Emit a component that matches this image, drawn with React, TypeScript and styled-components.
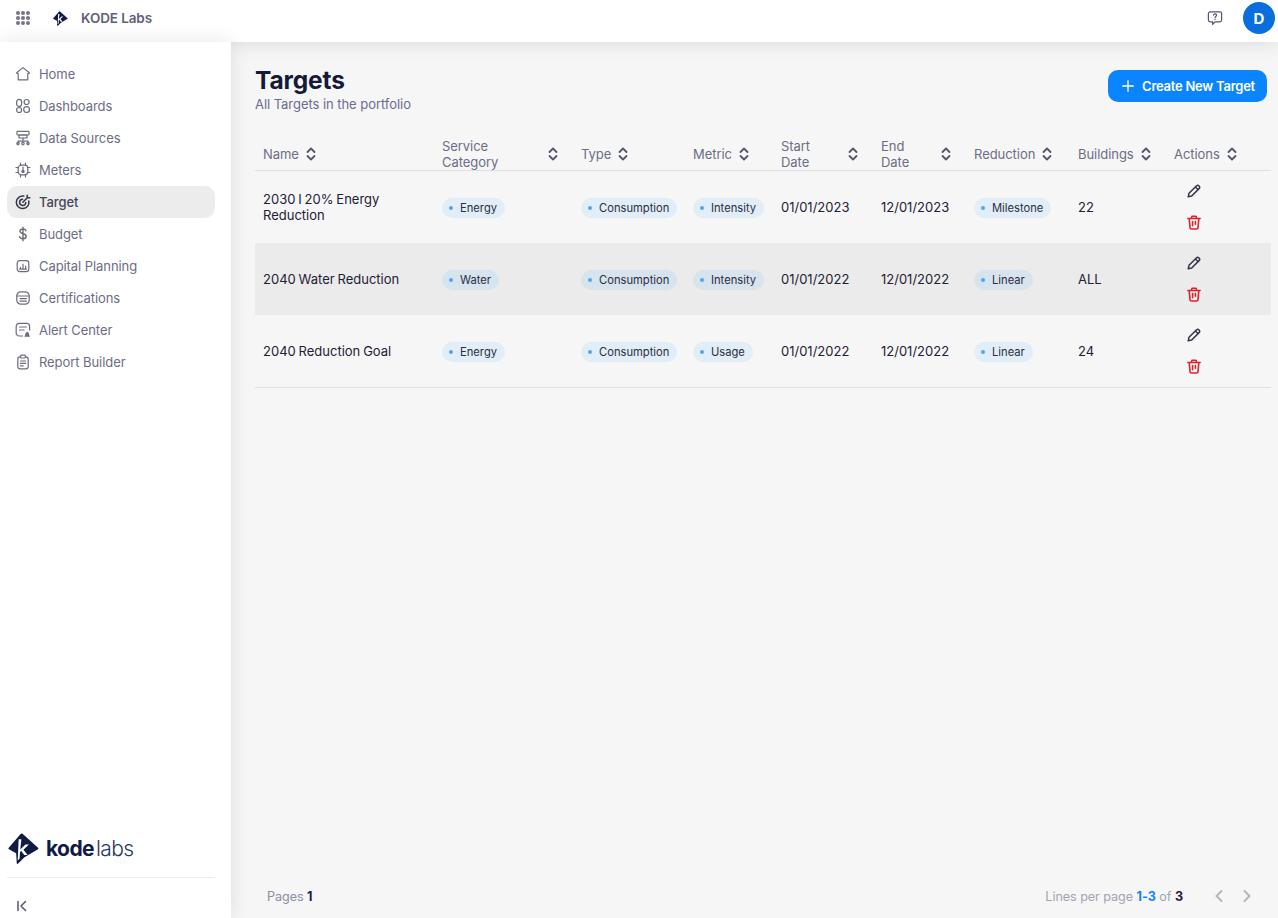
import React from "react";
import styled, { createGlobalStyle } from "styled-components";
import { ChevronLeft, ChevronRight, Plus } from "lucide-react";

const Global = createGlobalStyle`
  html, body { margin: 0; padding: 0; height: 100%; }
  body { font-family: Inter, "Noto Sans", "Liberation Sans", sans-serif; background: #f6f6f6; }
  * { box-sizing: border-box; }
`;

const Page = styled.div`
  width: 1278px; height: 918px; display: flex; flex-direction: column; overflow: hidden; background: #f6f6f6;
`;
const TopBar = styled.header`
  height: 42px; flex: none; background: #fff; display: flex; align-items: center;
  padding: 0 3px 6px 16px; box-shadow: 0 0 20px rgba(0,0,0,.13); position: relative; z-index: 2;
`;
const Brand = styled.div`
  margin-left: 23px; display: flex; align-items: center; gap: 13px;
  font-size: 13.5px; font-weight: 600; color: #5f6078; letter-spacing: -0.1px;
`;
const TopRight = styled.div`
  margin-left: auto; display: flex; align-items: center; gap: 20px;
`;
const Avatar = styled.div`
  width: 32px; height: 32px; border-radius: 50%; background: #0a6fdc; color: #fff;
  display: flex; align-items: center; justify-content: center; font-weight: 700; font-size: 15px;
`;
const Body = styled.div`
  flex: 1; display: flex; min-height: 0;
`;
const Sidebar = styled.aside`
  width: 231px; flex: none; background: #fff; display: flex; flex-direction: column;
  padding: 16px 16px 0 7px; box-shadow: 0 0 20px rgba(0,0,0,.1); position: relative; z-index: 3;
`;
const NavList = styled.nav`
  display: flex; flex-direction: column; flex: 1;
`;
const NavItem = styled.div<{ $active?: boolean }>`
  height: 32px; border-radius: 10px; display: flex; align-items: center; gap: 8px; padding-left: 8px;
  font-size: 13px; letter-spacing: -0.07px; font-weight: ${p => (p.$active ? 500 : 400)};
  color: ${p => (p.$active ? "#45465a" : "#6c6d85")};
  background: ${p => (p.$active ? "#ececec" : "transparent")};
  svg { flex: none; color: ${p => (p.$active ? "#35364a" : "#6c6d7c")}; }
`;
const SideFooter = styled.div`
  display: flex; flex-direction: column;
`;
const LogoRow = styled.div`
  display: flex; align-items: center; height: 36px; margin-bottom: 11px; gap: 7px; padding-left: 1px;
`;
const LogoText = styled.div`
  font-size: 21px; color: #0f1b45; font-weight: 700; letter-spacing: -0.6px; line-height: 1;
  span { font-weight: 300; margin-left: 2px; color: #2c3763; }
`;
const Collapse = styled.div`
  border-top: 1px solid #ececec; height: 41px; display: flex; align-items: flex-start;
  padding: 21px 0 0 8px; color: #55566a;
`;
const Main = styled.main`
  flex: 1; min-width: 0; padding: 26px 7px 0 24px; display: flex; flex-direction: column;
`;
const TitleRow = styled.div`
  display: flex; justify-content: space-between; align-items: flex-start; height: 67px; padding-right: 4px;
`;
const Title = styled.h1`
  margin: 0; font-size: 24.5px; line-height: 25px; font-weight: 700; color: #141a3a; letter-spacing: -0.15px;
`;
const Subtitle = styled.div`
  font-size: 13px; line-height: 18px; color: #696c8e; letter-spacing: -0.05px; margin-top: 2px;
`;
const CreateButton = styled.button`
  margin-top: 2px; height: 32px; width: 159px; border: 0; border-radius: 10px; background: #0a84ff; color: #fff;
  display: flex; align-items: center; justify-content: center; gap: 5px; padding: 0 1px 0 0;
  font-family: inherit; font-size: 13px; font-weight: 600; letter-spacing: -0.25px;
`;
const Table = styled.table`
  border-collapse: separate; border-spacing: 0; table-layout: fixed; width: 1016px; margin-top: 2px;
`;
const Th = styled.th`
  height: 34px; padding: 0 8px; text-align: left; font-weight: 400; font-size: 13px; line-height: 16px;
  color: #6c6d85; border-bottom: 1px solid #e0e0e2; letter-spacing: -0.05px;
`;
const ThLabel = styled.span<{ $wrap?: boolean }>`
  width: ${p => (p.$wrap ? "min-content" : "auto")};
`;
const ThInner = styled.div<{ $spread?: boolean }>`
  display: flex; align-items: center; gap: 7px;
  justify-content: ${p => (p.$spread ? "space-between" : "flex-start")};
  padding-right: ${p => (p.$spread ? "7px" : "0")};
`;
const SortSvg = styled.svg`
  flex: none; display: block;
`;
const Tr = styled.tr<{ $shade?: boolean }>`
  height: 72px; background: ${p => (p.$shade ? "#ebebeb" : "transparent")};
`;
const Td = styled.td`
  padding: 0 8px; font-size: 13px; line-height: 16px; color: #1e2035; letter-spacing: 0; word-spacing: -0.8px;
`;
const LastRow = styled.tr`
  td { padding: 0; height: 1px; border-top: 1px solid #e0e0e2; }
`;
const Chip = styled.span`
  display: inline-flex; align-items: center; height: 20px; border-radius: 10px; background: rgba(71,171,254,.12);
  padding: 0 8px 0 7px; gap: 7px; font-size: 11.2px; color: #2b2d45; white-space: nowrap; word-spacing: 0;
  position: relative; top: 0.5px;
  &::before { content: ""; width: 4px; height: 4px; border-radius: 50%; background: #4ba6f5; }
`;
const Actions = styled.div`
  display: flex; flex-direction: column; gap: 17px; padding-left: 5px; align-items: flex-start;
  margin-left: 8px;
  svg { display: block; }
`;
const PagerRow = styled.footer`
  margin-top: auto; height: 44px; display: flex; align-items: center; justify-content: space-between;
  padding: 0 14px 0 12px; font-size: 12.6px; color: #8d8e9f; letter-spacing: -0.05px;
  b { font-weight: 700; color: #1b1d38; }
  em { font-style: normal; font-weight: 700; color: #0a84ff; }
`;
const PagerLines = styled.div`
  color: #a2a3b2;
`;
const PagerRight = styled.div`
  display: flex; align-items: center;
`;
const PagerArrows = styled.div`
  display: flex; gap: 8px; margin-left: 26px; color: #b4b5bf;
`;

type IconProps = { children: React.ReactNode };
const NavSvg = ({ children }: IconProps) => (
  <svg width="16" height="16" viewBox="0 0 16 16" fill="none" stroke="currentColor" strokeWidth="1.2" strokeLinecap="round" strokeLinejoin="round">{children}</svg>
);

const icons: Record<string, React.ReactNode> = {
  Home: <NavSvg><path d="M8 1.6 14.6 7l-1.8.6v6.2H3.2V7.6L1.4 7z" /></NavSvg>,
  Dashboards: <NavSvg><rect x="1.6" y="1.4" width="5" height="7" rx="2.5" /><circle cx="11.6" cy="4" r="2.5" /><circle cx="4.1" cy="12" r="2.5" /><circle cx="11.6" cy="11.6" r="2.9" /></NavSvg>,
  "Data Sources": <NavSvg><rect x="2" y="1.4" width="12" height="3.6" rx=".8" /><rect x="4" y="5" width="8" height="3" /><path d="M8 8v3M3 14V11.2h10V14" /><circle cx="3" cy="13.6" r="1.2" /><circle cx="8" cy="13.6" r="1.2" /><circle cx="13" cy="13.6" r="1.2" /></NavSvg>,
  Meters: <NavSvg><rect x="3.2" y="3.2" width="9.6" height="9.6" rx="3" /><path d="M5.5 1v2.2M10.5 1v2.2M5.5 12.8V15M10.5 12.8V15M1 5.5h2.2M1 10.5h2.2M12.8 5.5H15M12.8 10.5H15" /><path d="M8 5.2v3" /><circle cx="8" cy="9.4" r="1.1" fill="currentColor" /></NavSvg>,
  Target: <NavSvg><path strokeWidth="1.5" d="M13.8 7a6.3 6.3 0 1 1-5-4.9" /><path strokeWidth="1.5" d="M10.8 8.5A3.1 3.1 0 1 1 7.6 5.2" /><path strokeWidth="1.5" d="m7.8 8.2 4-4" /><path d="M12.2 1.2v2.6h2.6" strokeWidth="1.5" /></NavSvg>,
  Budget: <NavSvg><path strokeWidth="1.4" d="M11 4.800C10.700 3.600 9.600 3 8 3c-1.800 0-3 .9-3 2.300 0 3.200 6.200 1.700 6.200 5 0 1.500-1.300 2.500-3.200 2.500-1.800 0-3-.8-3.300-2.100M8 1.200v13.600" /></NavSvg>,
  "Capital Planning": <NavSvg><rect x="2.2" y="2.6" width="11.6" height="11" rx="2.6" /><path d="M5.400 11V9.400M8 11V6.200M10.600 11V8.200M4.600 11.200h6.800" /></NavSvg>,
  Certifications: <NavSvg><rect x="1.800" y="1.800" width="12.400" height="12.400" rx="4" /><path d="M2 6h12M5 8.600h6.400M5 11.200h6.400" /></NavSvg>,
  "Alert Center": <NavSvg><path d="M7.500 14H4.200a3 3 0 0 1-3-3V4.400a3 3 0 0 1 3-3h7.400a3 3 0 0 1 3 3V8" /><path d="M4.400 5h7M4.400 8h4.600" /><path d="M10 14.200h4.400M10.800 14c0-2 .2-3.400 1.400-3.400s1.400 1.400 1.400 3.400" fill="currentColor" /></NavSvg>,
  "Report Builder": <NavSvg><rect x="2.800" y="2.800" width="10.400" height="12" rx="2.200" /><rect x="5.600" y="1.200" width="4.800" height="2.800" rx=".8" fill="#fff" /><path d="M5.400 7h5.200M5.400 9.400h5.200M5.400 11.800h2.800" /></NavSvg>,
};
const navNames = Object.keys(icons);

const GridIcon = () => (
  <svg width="14" height="14" viewBox="0 0 14 14" fill="#74748a">
    {[2, 7, 12].flatMap(y => [2, 7, 12].map(x => <circle key={`${x}-${y}`} cx={x} cy={y} r="2" />))}
  </svg>
);
const KodeMark = ({ size }: { size: number }) => (
  <svg width={size} height={size} viewBox="0 0 32 32">
    <path fill="#0f1b45" d="M15 .8 31 15.200c.5.5.5 1 0 1.500L17 25l-6.500 6.600c-.7.7-1.500.4-1.500-.6L8.400 21 1 16.800c-.8-.6-.8-1.200 0-1.800L13 1c.6-.5 1.400-.7 2-.2Z" />
    <path fill="#fff" d="M11 6.500h2.800L12.700 17l5.300-5.200h3.600l-5.700 5.500 4.400 5.500h-3.500l-3.100-4.300-1.300 1.200-.5 7-1.900 1.600z" />
  </svg>
);
const HelpIcon = () => (
  <svg width="16" height="16" viewBox="0 0 16 16" fill="none" stroke="#55566a" strokeWidth="1.2" strokeLinejoin="round">
    <path d="M3.200 1.800h9.600a1.800 1.800 0 0 1 1.800 1.800v6.400a1.800 1.800 0 0 1-1.800 1.800H8L5.600 14.400v-2.600H3.200A1.800 1.800 0 0 1 1.400 10V3.600a1.800 1.800 0 0 1 1.800-1.800Z" />
    <path d="M6.500 5.200c.2-.9.800-1.300 1.600-1.300.9 0 1.500.5 1.500 1.300 0 1.200-1.600 1.200-1.600 2.400M8 9.200v.2" strokeLinecap="round" />
  </svg>
);
const Sort = () => (
  <SortSvg width="10" height="14" viewBox="0 0 10 14" fill="none" stroke="#55566a" strokeWidth="1.800" strokeLinecap="round" strokeLinejoin="round">
    <path d="M1.500 5 5 1.500 8.500 5M1.500 9 5 12.500 8.500 9" />
  </SortSvg>
);
const EditIcon = () => (
  <svg width="14" height="14" viewBox="0 0 14 14" fill="none" stroke="#34354a" strokeWidth="1.500" strokeLinejoin="round" strokeLinecap="round">
    <path d="M1.200 12.800 2 9.300 9.600 1.700a1.400 1.400 0 0 1 2 0l.7.7a1.400 1.400 0 0 1 0 2L4.700 12z" />
    <path d="M8.500 3 11 5.500" />
  </svg>
);
const TrashIcon = () => (
  <svg width="14" height="15" viewBox="0 0 14 15" fill="none" stroke="#e0202a" strokeWidth="1.600" strokeLinecap="round" strokeLinejoin="round">
    <path d="M.9 3.500h12.200M4.400 3 5 1.200h4L9.600 3" />
    <path d="M2.200 3.800 3 12.800A1.300 1.300 0 0 0 4.300 14h5.400a1.300 1.300 0 0 0 1.300-1.200l.8-9" />
    <path d="M5.600 6.500v4.200M8.400 6.500v2.800" />
  </svg>
);

const cols = [
  { label: "Name", w: 179 },
  { label: "Service Category", w: 139, spread: true },
  { label: "Type", w: 112 },
  { label: "Metric", w: 88 },
  { label: "Start Date", w: 100, spread: true },
  { label: "End Date", w: 93, spread: true },
  { label: "Reduction", w: 104 },
  { label: "Buildings", w: 96 },
  { label: "Actions", w: 105 },
];

const rows = [
  ["2030 I 20% Energy Reduction", "Energy", "Consumption", "Intensity", "01/01/2023", "12/01/2023", "Milestone", "22"],
  ["2040 Water Reduction", "Water", "Consumption", "Intensity", "01/01/2022", "12/01/2022", "Linear", "ALL"],
  ["2040 Reduction Goal", "Energy", "Consumption", "Usage", "01/01/2022", "12/01/2022", "Linear", "24"],
];

export default function App() {
  return (
    <Page>
      <Global />
      <TopBar>
        <GridIcon />
        <Brand><KodeMark size={15} />KODE Labs</Brand>
        <TopRight>
          <HelpIcon />
          <Avatar>D</Avatar>
        </TopRight>
      </TopBar>
      <Body>
        <Sidebar>
          <NavList>
            {navNames.map(n => (
              <NavItem key={n} $active={n === "Target"}>{icons[n]}{n}</NavItem>
            ))}
          </NavList>
          <SideFooter>
            <LogoRow><KodeMark size={31} /><LogoText>kode<span>labs</span></LogoText></LogoRow>
            <Collapse>
              <svg width="14" height="14" viewBox="0 0 14 14" fill="none" stroke="currentColor" strokeWidth="1.500" strokeLinecap="round" strokeLinejoin="round"><path d="M3 2.500v9M10.500 2.500 6 7l4.500 4.500" /></svg>
            </Collapse>
          </SideFooter>
        </Sidebar>
        <Main>
          <TitleRow>
            <div>
              <Title>Targets</Title>
              <Subtitle>All Targets in the portfolio</Subtitle>
            </div>
            <CreateButton><Plus size={18} strokeWidth={1.800} />Create New Target</CreateButton>
          </TitleRow>
          <Table>
            <colgroup>{cols.map(c => <col key={c.label} style={{ width: c.w }} />)}</colgroup>
            <thead>
              <tr>
                {cols.map(c => (
                  <Th key={c.label}>
                    <ThInner $spread={c.spread}><ThLabel $wrap={c.spread}>{c.label}</ThLabel><Sort /></ThInner>
                  </Th>
                ))}
              </tr>
            </thead>
            <tbody>
              {rows.map((r, i) => (
                <Tr key={r[0]} $shade={i === 1}>
                  <Td>{r[0]}</Td>
                  <Td><Chip>{r[1]}</Chip></Td>
                  <Td><Chip>{r[2]}</Chip></Td>
                  <Td><Chip>{r[3]}</Chip></Td>
                  <Td>{r[4]}</Td>
                  <Td>{r[5]}</Td>
                  <Td><Chip>{r[6]}</Chip></Td>
                  <Td>{r[7]}</Td>
                  <Td>
                    <Actions>
                      <EditIcon />
                      <TrashIcon />
                    </Actions>
                  </Td>
                </Tr>
              ))}
              <LastRow><td colSpan={9} /></LastRow>
            </tbody>
          </Table>
          <PagerRow>
            <div>Pages <b>1</b></div>
            <PagerRight>
              <PagerLines>Lines per page <em>1-3</em> of <b>3</b></PagerLines>
              <PagerArrows><ChevronLeft size={20} strokeWidth={2.400} /><ChevronRight size={20} strokeWidth={2.400} /></PagerArrows>
            </PagerRight>
          </PagerRow>
        </Main>
      </Body>
    </Page>
  );
}
